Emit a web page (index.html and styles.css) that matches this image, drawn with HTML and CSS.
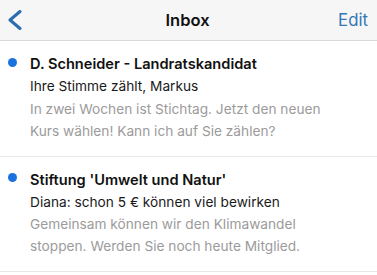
FILE: index.html
```html
<!DOCTYPE html>
<html lang="de">
  <head>
    <meta charset="UTF-8" />
    <meta name="viewport" content="width=device-width, initial-scale=1.0" />
    <title>Inbox</title>
    <link rel="stylesheet" href="styles.css">
  </head>
  <body>
    <div class="nav">
      <div class="back">
        <svg width="16" height="20" viewBox="0 0 16 20">
          <path d="M13 1.5 L3 10 L13 18.5" fill="none" stroke="#2d6cae" stroke-width="3" stroke-linecap="round" stroke-linejoin="round" />
        </svg>
      </div>
      <div class="title">Inbox</div>
      <div class="edit">Edit</div>
    </div>

    <div class="mail">
      <div class="dot"></div>
      <div class="content">
        <div class="sender">D. Schneider - Landratskandidat</div>
        <div class="subject">Ihre Stimme zählt, Markus</div>
        <div class="preview">In zwei Wochen ist Stichtag. Jetzt den neuen Kurs wählen! Kann ich auf Sie zählen?</div>
      </div>
    </div>

    <div class="mail">
      <div class="dot"></div>
      <div class="content">
        <div class="sender">Stiftung 'Umwelt und Natur'</div>
        <div class="subject">Diana: schon 5 € können viel bewirken</div>
        <div class="preview">Gemeinsam können wir den Klimawandel stoppen. Werden Sie noch heute Mitglied.</div>
      </div>
    </div>
  </body>
</html>
```

FILE: styles.css
```css
*,
*::before,
*::after {
  box-sizing: border-box;
  margin: 0;
  padding: 0;
}

body {
  background-color: white;
  font-family: Inter, "Liberation Sans", sans-serif;
  color: #111;
  width: 377px;
  height: 275px;
  overflow: hidden;
}

.nav {
  height: 41px;
  background-color: #f6f6f6;
  border-bottom: 1px solid #d9d9d9;
  display: grid;
  grid-template-columns: 1fr auto 1fr;
  align-items: center;
  padding: 0 9px 0 7px;
}

.back {
  display: flex;
  align-items: center;
}

.title {
  font-size: 16.5px;
  font-weight: 600;
  color: #111;
}

.edit {
  text-align: right;
  font-size: 16.8px;
  color: #3578b3;
}

.mail {
  display: flex;
  padding: 12px 42px 14px 8px;
  border-bottom: 1px solid #e8e8e8;
}

.dot {
  width: 9px;
  height: 9px;
  border-radius: 50%;
  background-color: #1b72de;
  margin-top: 4.5px;
  margin-right: 13px;
  flex-shrink: 0;
}

.content {
  flex: 1;
}

.sender {
  font-size: 14.6px;
  font-weight: 600;
  line-height: 22px;
}

.subject {
  font-size: 13.7px;
  line-height: 22.5px;
  color: #1a1a1a;
}

.preview {
  font-size: 13.7px;
  line-height: 22px;
  color: #9b9b9b;
}
```
